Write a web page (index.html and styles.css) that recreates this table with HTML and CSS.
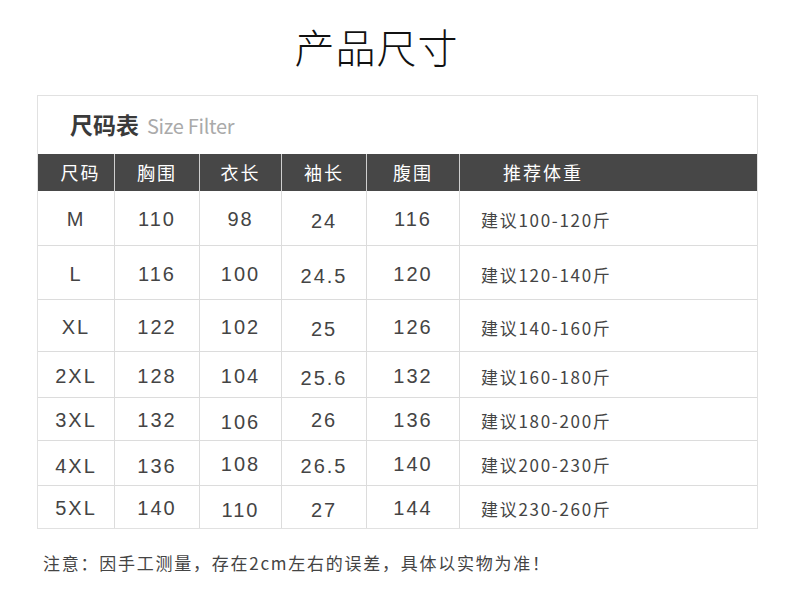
FILE: index.html
```html
<!DOCTYPE html>
<html lang="zh-CN">
<head>
<meta charset="utf-8">
<title>产品尺寸</title>
<link rel="stylesheet" href="styles.css">
</head>
<body>
<div class="page">
  <h1 class="title">产品尺寸</h1>
  <div class="box">
    <div class="box-head">
      <span class="zh">尺码表</span>
      <span class="en">Size Filter</span>
    </div>
    <div class="grid">
      <div class="th first">尺码</div>
      <div class="th">胸围</div>
      <div class="th">衣长</div>
      <div class="th">袖长</div>
      <div class="th">腹围</div>
      <div class="th last">推荐体重</div>

      <div class="td">M</div>
      <div class="td">110</div>
      <div class="td">98</div>
      <div class="td lo">24</div>
      <div class="td">116</div>
      <div class="td wt">建议100-120斤</div>

      <div class="td">L</div>
      <div class="td">116</div>
      <div class="td">100</div>
      <div class="td lo">24.5</div>
      <div class="td">120</div>
      <div class="td wt">建议120-140斤</div>

      <div class="td">XL</div>
      <div class="td">122</div>
      <div class="td">102</div>
      <div class="td lo">25</div>
      <div class="td">126</div>
      <div class="td wt">建议140-160斤</div>

      <div class="td">2XL</div>
      <div class="td">128</div>
      <div class="td">104</div>
      <div class="td lo">25.6</div>
      <div class="td">132</div>
      <div class="td wt">建议160-180斤</div>

      <div class="td">3XL</div>
      <div class="td">132</div>
      <div class="td lo">106</div>
      <div class="td">26</div>
      <div class="td">136</div>
      <div class="td wt">建议180-200斤</div>

      <div class="td lo">4XL</div>
      <div class="td lo">136</div>
      <div class="td">108</div>
      <div class="td lo">26.5</div>
      <div class="td">140</div>
      <div class="td wt">建议200-230斤</div>

      <div class="td">5XL</div>
      <div class="td">140</div>
      <div class="td lo">110</div>
      <div class="td lo">27</div>
      <div class="td">144</div>
      <div class="td wt">建议230-260斤</div>
    </div>
  </div>
  <p class="note">注意：因手工测量，存在2cm左右的误差，具体以实物为准！</p>
</div>
</body>
</html>
```

FILE: styles.css
```css
* { box-sizing: border-box; }
html, body { margin: 0; padding: 0; background: #fff; }
body { font-family: "Noto Sans CJK SC", "Noto Sans", sans-serif; color: #333; }

.page { width: 790px; padding: 0 32px 0 37px; }

.title {
  margin: 0;
  height: 95px;
  padding: 26px 42px 0 0;
  text-align: center;
  font-size: 40px;
  line-height: 40px;
  font-weight: 300;
  letter-spacing: 1px;
  color: #111;
}

.box {
  width: 721px;
  border: 1px solid #e1e1e1;
}

.box-head {
  height: 58px;
  display: flex;
  align-items: baseline;
  padding: 13px 0 0 32px;
  gap: 8px;
}
.box-head .zh { font-size: 23px; font-weight: 700; color: #3a3a3a; line-height: 30px; }
.box-head .en { font-size: 20px; color: #aaa; font-weight: 400; letter-spacing: -0.3px; }

.grid {
  display: grid;
  grid-template-columns: 77px 85px 82px 85px 93px 297px;
  grid-template-rows: 37px 55px 54px 52px 46px 43px 45px 42px;
}

.th, .td {
  display: flex;
  align-items: center;
  justify-content: center;
  border-right: 1px solid #dcdcdc;
  border-bottom: 1px solid #dcdcdc;
}
.th {
  background: #474747;
  color: #fff;
  font-size: 18px;
  letter-spacing: 2px;
  border-right-color: #cfcfcf;
  border-bottom: 0;
  padding-bottom: 1px;
}
.th.first { padding-left: 9px; }
.th.last { justify-content: flex-start; padding-left: 43px; border-right: 0; }

.td {
  font-family: "Liberation Sans", Arial, sans-serif;
  font-size: 20px;
  letter-spacing: 2px;
  color: #444;
  padding-top: 3px;
}
.td.lo { padding-top: 7px; }
.td.wt {
  justify-content: flex-start;
  padding-left: 21px;
  font-family: "Noto Sans CJK SC", sans-serif;
  font-size: 17px;
  letter-spacing: 1.7px;
  border-right: 0;
  color: #444;
}
.grid .td:nth-last-child(-n+6) { border-bottom: 0; }

.note {
  margin: 22px 0 0 6px;
  font-size: 17px;
  letter-spacing: 1.75px;
  color: #444;
  line-height: 24px;
}
```
